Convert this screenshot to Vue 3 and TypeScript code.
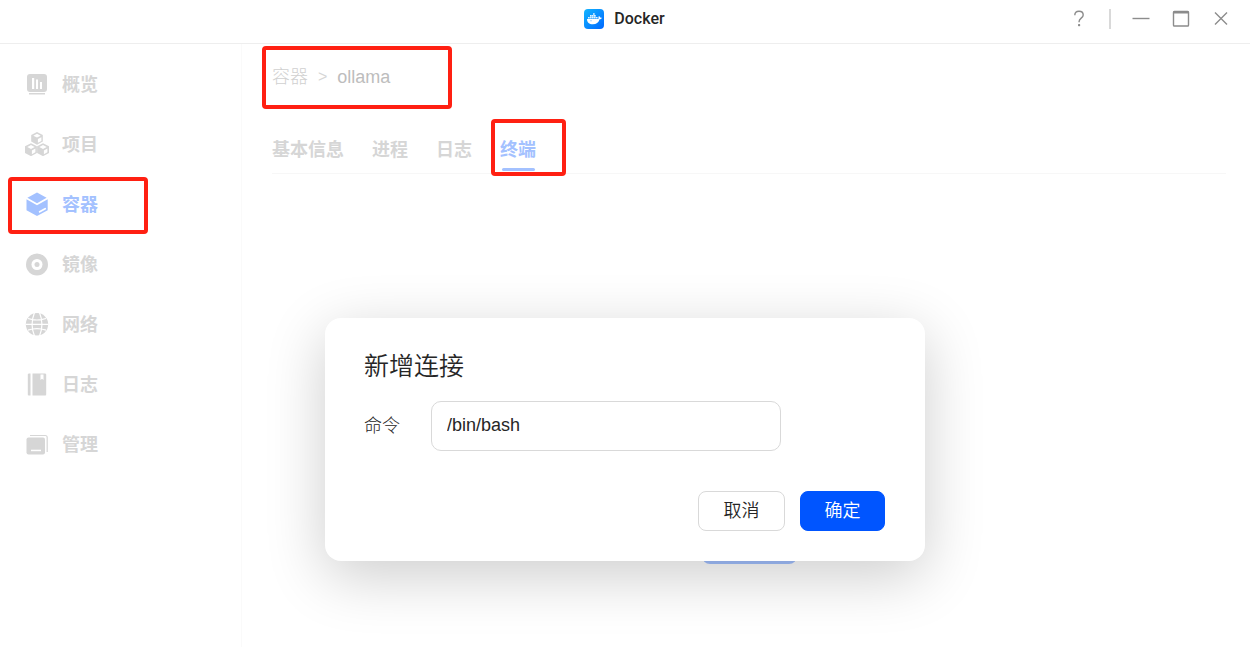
<script setup lang="ts">
import { ref } from 'vue'

type NavKey = 'overview' | 'project' | 'container' | 'image' | 'network' | 'log' | 'manage'

const navItems: { key: NavKey; label: string }[] = [
  { key: 'overview', label: '概览' },
  { key: 'project', label: '项目' },
  { key: 'container', label: '容器' },
  { key: 'image', label: '镜像' },
  { key: 'network', label: '网络' },
  { key: 'log', label: '日志' },
  { key: 'manage', label: '管理' },
]
const activeNav = ref<NavKey>('container')

const tabs: string[] = ['基本信息', '进程', '日志', '终端']
const activeTab = ref('终端')

const command = ref('/bin/bash')
</script>

<template>
  <div class="window">
    <header class="titlebar">
      <div class="brand">
        <svg class="brand-icon" viewBox="0 0 20 20" aria-hidden="true">
          <defs>
            <linearGradient id="brandFill" x1="0" y1="0" x2="1" y2="1">
              <stop offset="0" stop-color="#12b5ff" />
              <stop offset="1" stop-color="#0067ff" />
            </linearGradient>
          </defs>
          <rect width="20" height="20" rx="4" fill="url(#brandFill)" />
          <path
            fill="#fff"
            d="M3 10h11.2c.5-.5.5-1.300 .1-2 .2-.5.5-.8.8-1 .6.500 .9 1 1 1.600.6-.1 1.200 0 1.700.3-.3.900-1 1.400-2.200 1.400C14.700 13.500 12.300 15.300 8.800 15.300 5.300 15.300 3 13.600 3 10z"
          />
          <path
            fill="#e4f4ff"
            d="M4 8h1.700v1.600H4zM6 8h1.700v1.600H6zM8 8h1.700v1.600H8zM10 8h1.700v1.600H10zM12 8h1.600v1.600H12zM6 6.100h1.700v1.600H6zM8 6.100h1.700v1.600H8zM10 6.100h1.700v1.600H10zM9 4.200h1.700v1.600H9z"
          />
          <circle cx="7" cy="11.800" r=".5" fill="#2b93ff" />
        </svg>
        <span>Docker</span>
      </div>
      <div class="controls">
        <button type="button" aria-label="帮助">
          <svg viewBox="0 0 20 20">
            <path d="M5.800 6.200C5.800 3.600 7.600 2.200 10 2.200s4.200 1.400 4.200 3.700c0 3.200-4.100 3.300-4.100 6.600v.7" />
            <rect x="9" y="15" width="2.200" height="2.200" rx=".7" fill="#8c8c8c" stroke="none" />
          </svg>
        </button>
        <i class="divider"></i>
        <button type="button" aria-label="最小化">
          <svg viewBox="0 0 20 20"><path d="M1.500 9.500h17" /></svg>
        </button>
        <button type="button" aria-label="最大化">
          <svg viewBox="0 0 20 20">
            <rect x="2.500" y="2.500" width="15" height="14.500" rx=".8" />
            <path d="M2.500 3.300h15" stroke-width="2.400" />
          </svg>
        </button>
        <button type="button" aria-label="关闭">
          <svg viewBox="0 0 20 20"><path d="M4 3.500l12 12M16 3.500l-12 12" /></svg>
        </button>
      </div>
    </header>

    <div class="body">
      <nav class="sidebar">
        <a
          v-for="item in navItems"
          :key="item.key"
          href="#"
          class="nav-item"
          :class="{ active: item.key === activeNav }"
          @click.prevent="activeNav = item.key"
        >
          <svg viewBox="0 0 24 24" aria-hidden="true">
            <template v-if="item.key === 'overview'">
              <rect x="2" y="2" width="20" height="18" rx="3" />
              <path d="M4 21h16v1.500H4z" />
              <path class="cut" d="M7 6h2.200v11H7zM11 7.500h2v9.500h-2zM15 10h2v7h-2z" />
            </template>
            <template v-else-if="item.key === 'project'">
              <path d="M12 0l5.800 3v6.500L12 12.700 6.200 9.500V3z" />
              <path d="M6 11.300l5.900 3v6.700L6 24.200 0 21v-6.700z" />
              <path d="M18 11.300l6 3V21l-6 3.200-5.900-3.200v-6.700z" />
              <path class="cut" d="M12 1.800l3.700 1.900L12 5.600 8.300 3.700zM12.900 7l3.500-1.800v3.700l-3.500 1.900z" />
              <path class="cut" d="M6 13.100L9.700 15 6 16.900 2.300 15zM6.900 18.400l3.500-1.800v3.700l-3.500 1.900z" />
              <path class="cut" d="M18 13.100l3.700 1.900-3.700 1.900-3.700-1.900zM18.900 18.400l3.500-1.800v3.700l-3.500 1.900z" />
            </template>
            <template v-else-if="item.key === 'container'">
              <path d="M12 .5l9.600 5.300L12 11.300 2.400 5.800z" />
              <path d="M1.500 7.200L12 13.200l10.700-6v11L12 24 1.500 18.200z" />
              <path class="line" d="M14.700 19.800l5.500-3.100" />
            </template>
            <template v-else-if="item.key === 'image'">
              <circle cx="12" cy="12.500" r="11" />
              <circle class="cut" cx="12" cy="12.500" r="5.500" />
              <circle cx="12" cy="12.500" r="2.500" />
            </template>
            <template v-else-if="item.key === 'network'">
              <circle cx="12" cy="12.300" r="11.200" />
              <path
                class="thin"
                d="M.5 12.300h23M3 6.500q9 3 18 0M3 18.100q9-3 18 0M9.500.5C6.500 8 6.500 17 9.500 24M14.500.5c3 7.500 3 16.500 0 23.500"
              />
            </template>
            <template v-else-if="item.key === 'log'">
              <path d="M4 1.500h1.500v22H4A1.200 1.200 0 0 1 2.800 22V3A1.200 1.200 0 0 1 4 1.500z" />
              <path d="M7.500 1.500H20A1.200 1.200 0 0 1 21.200 3v19a1.200 1.200 0 0 1-1.200 1.500H7.500z" />
              <path class="cut" d="M15.500 2.500h3v5.500l-1.500-1.300L15.500 8z" />
            </template>
            <template v-else>
              <rect x="1.500" y="5.500" width="18.500" height="17" rx="2" />
              <path class="edge" d="M5 3.500h15.200a2 2 0 0 1 2 2V20" />
              <path class="cut" d="M6 17.700h10v1.500H6z" />
            </template>
          </svg>
          <span>{{ item.label }}</span>
          <i v-if="item.key === 'container'" class="mark mark-nav"></i>
        </a>
      </nav>

      <main class="content">
        <div class="crumbs">
          <a href="#" @click.prevent>容器</a>
          <span class="sep">&gt;</span>
          <span class="current">ollama</span>
          <i class="mark mark-crumbs"></i>
        </div>
        <div class="tabs" role="tablist">
          <button
            v-for="tab in tabs"
            :key="tab"
            type="button"
            role="tab"
            class="tab"
            :class="{ active: tab === activeTab }"
            :aria-selected="tab === activeTab"
            @click="activeTab = tab"
          >
            {{ tab }}
            <i v-if="tab === '终端'" class="mark mark-tab"></i>
          </button>
        </div>
        <div class="empty">
          <button type="button" class="add" aria-label="新增连接"></button>
        </div>
      </main>
    </div>

    <div class="overlay">
      <form class="dialog" role="dialog" aria-labelledby="dialogTitle" @submit.prevent>
        <h2 id="dialogTitle">新增连接</h2>
        <div class="field">
          <label for="command">命令</label>
          <input id="command" v-model="command" type="text" />
        </div>
        <div class="actions">
          <button type="button" class="btn">取消</button>
          <button type="submit" class="btn primary">确定</button>
        </div>
      </form>
    </div>
  </div>
</template>

<style>
body {
  margin: 0;
  background: #fff;
}
</style>

<style scoped>
.window,
.window * {
  box-sizing: border-box;
}
.window {
  position: relative;
  display: flex;
  flex-direction: column;
  min-height: 100vh;
  overflow: hidden;
  color: #262626;
  font-family: 'Liberation Sans', 'Noto Sans CJK SC', sans-serif;
  font-size: 18px;
  line-height: 24px;
}
button,
input {
  margin: 0;
  padding: 0;
  border: 0;
  background: none;
  color: inherit;
  font: inherit;
}
a {
  color: inherit;
  text-decoration: none;
}
.titlebar {
  display: grid;
  grid-template-columns: 1fr auto 1fr;
  height: 44px;
  padding: 0 19px 6px 18px;
  border-bottom: 1px solid #eee;
  align-items: center;
}
.brand {
  grid-column: 2;
  display: flex;
  align-items: center;
  gap: 10px;
  font-family: Roboto, sans-serif;
  font-size: 16px;
  font-weight: 500;
}
.brand-icon {
  width: 20px;
  height: 20px;
}
.controls {
  display: flex;
  justify-content: flex-end;
  align-items: center;
  gap: 20px;
}
.controls button,
.controls svg {
  display: block;
  width: 20px;
  height: 20px;
}
.controls svg {
  fill: none;
  stroke: #8c8c8c;
  stroke-width: 1.4;
}
.divider {
  width: 2px;
  height: 20px;
  background: #d9d9d9;
}
.body {
  display: flex;
  flex: 1;
}
.sidebar {
  flex: 0 0 242px;
  padding-top: 10px;
  border-right: 1px solid #fafafa;
}
.nav-item {
  position: relative;
  display: flex;
  align-items: center;
  gap: 13px;
  height: 60px;
  padding-left: 25px;
  color: #d6d6d6;
  font-weight: 700;
}
.nav-item span {
  padding-top: 1px;
}
.nav-item.active {
  color: #a3c1ff;
}
.nav-item svg {
  width: 24px;
  height: 24px;
  fill: currentColor;
}
.nav-item .cut {
  fill: #fff;
}
.nav-item .line {
  fill: none;
  stroke: #fff;
  stroke-width: 1.8;
  stroke-linecap: round;
}
.nav-item .thin {
  fill: none;
  stroke: #fff;
  stroke-width: 1.2;
}
.nav-item .edge {
  fill: none;
  stroke: currentColor;
  stroke-width: 1.2;
}
.mark {
  position: absolute;
  border: 4px solid #ff2012;
  border-radius: 4px;
  pointer-events: none;
}
.mark-nav {
  top: 3px;
  left: 8px;
  width: 140px;
  height: 57px;
}
.content {
  flex: 1;
  min-width: 0;
  padding: 21px 24px 0 30px;
}
.crumbs {
  position: relative;
  display: flex;
  align-items: center;
  width: max-content;
  gap: 10px;
  color: #d0d0d0;
  font-weight: 300;
}
.crumbs .sep {
  color: #d6d6d6;
  font-size: 16px;
}
.crumbs .current {
  color: #bdbdbd;
}
.mark-crumbs {
  top: -19px;
  left: -10px;
  width: 190px;
  height: 63px;
}
.tabs {
  display: flex;
  gap: 28px;
  margin-top: 42px;
  border-bottom: 1px solid #f7f7f7;
}
.tab {
  position: relative;
  height: 42px;
  padding-bottom: 5px;
  color: #d6d6d6;
  font-weight: 700;
}
.tab.active {
  color: #a3c1ff;
}
.tab.active::after {
  content: '';
  position: absolute;
  right: 1px;
  bottom: 2px;
  left: 2px;
  height: 3px;
  border-radius: 2px;
  background: #a3c1ff;
}
.mark-tab {
  top: -12px;
  left: -9px;
  width: 75px;
  height: 57px;
}
.empty {
  display: flex;
  justify-content: center;
  padding-top: 350px;
}
.add {
  width: 95px;
  height: 40px;
  border-radius: 8px;
  background: #a3c1ff;
}
.overlay {
  position: absolute;
  inset: 0;
  display: flex;
  justify-content: center;
  align-items: flex-end;
  padding-bottom: 86px;
}
.dialog {
  width: 600px;
  max-width: 100%;
  padding: 31px 40px 30px 39px;
  border-radius: 16px;
  background: #fff;
  box-shadow: 0 15px 60px rgba(0, 0, 0, 0.2);
}
.dialog h2 {
  margin: 0;
  font-size: 25px;
  font-weight: 350;
  line-height: 35px;
}
.field {
  display: flex;
  align-items: center;
  gap: 31px;
  margin-top: 17px;
}
.field label {
  font-weight: 300;
}
.field input {
  width: 350px;
  height: 50px;
  padding: 0 15px 2px;
  border: 1px solid #d9d9d9;
  border-radius: 10px;
}
.actions {
  display: flex;
  justify-content: flex-end;
  gap: 15px;
  margin-top: 40px;
}
.btn {
  width: 87px;
  height: 40px;
  border: 1px solid #d9d9d9;
  border-radius: 8px;
  font-weight: 350;
}
.btn.primary {
  width: 85px;
  border-color: #0055ff;
  background: #0055ff;
  color: #fff;
}
</style>
